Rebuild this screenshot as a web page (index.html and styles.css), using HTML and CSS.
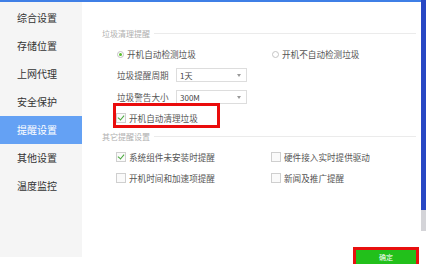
FILE: index.html
```html
<!DOCTYPE html>
<html lang="zh-CN">
<head>
  <meta charset="UTF-8">
  <title>提醒设置</title>
  <link rel="stylesheet" href="styles.css">
</head>
<body>
  <div class="window">
    <div class="body">
      <ul class="sidebar">
        <li>综合设置</li>
        <li>存储位置</li>
        <li>上网代理</li>
        <li>安全保护</li>
        <li class="active">提醒设置</li>
        <li>其他设置</li>
        <li>温度监控</li>
      </ul>

      <div class="main">
        <div class="section-title"><span>垃圾清理提醒</span><i></i></div>

        <div class="cols radio-row">
          <label class="opt"><span class="radio on"></span>开机自动检测垃圾</label>
          <label class="opt"><span class="radio"></span>开机不自动检测垃圾</label>
        </div>

        <div class="field">
          <span class="field-label">垃圾提醒周期</span>
          <div class="select">1天<span class="arrow"></span></div>
        </div>
        <div class="field">
          <span class="field-label">垃圾警告大小</span>
          <div class="select">300M<span class="arrow"></span></div>
        </div>

        <div class="cols check-row first">
          <label class="opt"><span class="check on"></span>开机自动清理垃圾</label>
        </div>

        <div class="section-title second"><span>其它提醒设置</span><i></i></div>

        <div class="cols check-row">
          <label class="opt"><span class="check on"></span>系统组件未安装时提醒</label>
          <label class="opt"><span class="check"></span>硬件接入实时提供驱动</label>
        </div>
        <div class="cols check-row">
          <label class="opt"><span class="check"></span>开机时间和加速项提醒</label>
          <label class="opt"><span class="check"></span>新闻及推广提醒</label>
        </div>

        <div class="footer">
          <button class="btn-ok">确定</button>
        </div>

        <div class="mark"></div>
      </div>
    </div>
  </div>
  <div class="edge">
    <div class="edge-blue"></div>
    <div class="edge-gray"></div>
  </div>
</body>
</html>
```

FILE: styles.css
```css
html, body {
  margin: 0;
  height: 264px;
  overflow: hidden;
}
body {
  display: flex;
  background: #fff;
  font-family: "Noto Sans CJK SC", "Noto Sans", sans-serif;
  color: #444;
}
.window {
  flex: 1;
  display: flex;
  flex-direction: column;
  border-top: 2px solid #3f7fe6;
}
.body {
  flex: 1;
  display: flex;
}
.sidebar {
  list-style: none;
  margin: 0;
  padding: 2px 0 0 0;
  width: 82px;
  height: 253px;
  background: #f5f5f5;
}
.sidebar li {
  height: 28px;
  line-height: 28px;
  padding-left: 17px;
  font-size: 10px;
  color: #333;
}
.sidebar li.active {
  background: #64a1f4;
  color: #fff;
}
.main {
  position: relative;
  flex: 1;
  display: flex;
  flex-direction: column;
  padding: 25px 5px 0 20px;
}
.section-title {
  display: flex;
  align-items: center;
  height: 12px;
  font-size: 8px;
  color: #b0b0b0;
}
.section-title i {
  flex: 1;
  height: 1px;
  margin-left: 4px;
  background: #ebebeb;
}
.section-title.second {
  margin-top: 6px;
}
.cols {
  display: grid;
  grid-template-columns: 155px auto;
  height: 12px;
  align-items: center;
}
.radio-row {
  margin: 9px 0 0 15px;
}
.check-row {
  margin: 9px 0 0 14px;
}
.check-row.first {
  margin-top: 8px;
}
.opt {
  display: flex;
  align-items: center;
  font-size: 8.6px;
  color: #555;
  white-space: nowrap;
}
.radio {
  width: 7px;
  height: 7px;
  border: 1px solid #c4c4c4;
  border-radius: 50%;
  margin-right: 3px;
  box-sizing: border-box;
  display: flex;
  align-items: center;
  justify-content: center;
  background: #fff;
}
.radio.on::after {
  content: "";
  width: 3px;
  height: 3px;
  border-radius: 50%;
  background: #5bbf2e;
}
.check {
  position: relative;
  width: 10px;
  height: 10px;
  border: 1px solid #cfcfcf;
  box-sizing: border-box;
  margin-right: 3px;
  background: #fafafa;
}
.check.on::after {
  content: "";
  position: absolute;
  left: 2px;
  top: 0;
  width: 3px;
  height: 5px;
  border: solid #46a83a;
  border-width: 0 1.5px 1.5px 0;
  transform: rotate(40deg);
}
.field {
  display: flex;
  align-items: center;
  margin: 8px 0 0 15px;
  height: 14px;
  font-size: 8.6px;
  color: #555;
}
.field-label {
  width: 59px;
}
.select {
  position: relative;
  width: 71px;
  height: 14px;
  line-height: 13px;
  box-sizing: border-box;
  border: 1px solid #ddd;
  padding-left: 3px;
  font-size: 8px;
  color: #444;
}
.arrow {
  position: absolute;
  right: 5px;
  top: 5px;
  border: 2.5px solid transparent;
  border-top: 3px solid #999;
}
.footer {
  margin-top: auto;
  display: flex;
  justify-content: flex-end;
}
.btn-ok {
  width: 60px;
  height: 14px;
  padding: 0;
  border: 0;
  background: #22c01b;
  color: #fff;
  font-family: inherit;
  font-size: 7px;
  outline: 3px solid #e8100f;
}
.mark {
  position: absolute;
  left: 31px;
  top: 101px;
  width: 107px;
  height: 25px;
  box-sizing: border-box;
  border: 3px solid #ea0c0c;
}
.edge {
  width: 5px;
  display: flex;
  flex-direction: column;
}
.edge-blue {
  height: 210px;
  background: #2848c4;
}
.edge-gray {
  height: 21px;
  background: #d4d4d8;
}
```
